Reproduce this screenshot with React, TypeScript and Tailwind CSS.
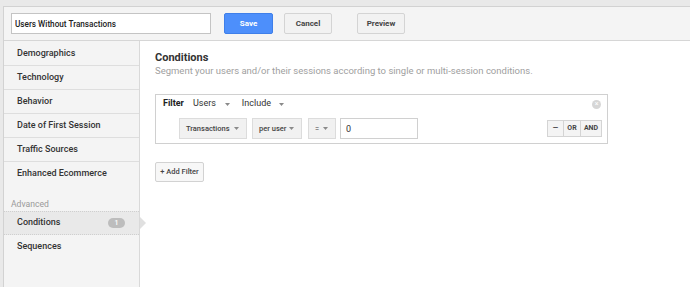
import { useState } from 'react'

const sections = [
  'Demographics',
  'Technology',
  'Behavior',
  'Date of First Session',
  'Traffic Sources',
  'Enhanced Ecommerce',
]

function Caret({ className = '' }: { className?: string }) {
  return (
    <svg width="5" height="3" viewBox="0 0 5 3" className={className}>
      <path d="M0 0 L5 0 L2.5 3 Z" fill="#8a8a8a" />
    </svg>
  )
}

function Select({ label, width }: { label: string; width: string }) {
  return (
    <div
      className={`${width} h-[21px] flex items-center justify-between pl-[6px] pr-[7px] bg-[#f1f1f1] border border-[#dcdcdc] text-[7.5px] font-medium text-[#444] whitespace-nowrap`}
    >
      <span>{label}</span>
      <Caret />
    </div>
  )
}

export default function App() {
  const [name, setName] = useState('Users Without Transactions')
  const [value, setValue] = useState('0')

  return (
    <div
      className="w-[690px] h-[287px] overflow-hidden bg-[#e9e9e9] pt-[6px] pl-[3px]"
      style={{ fontFamily: 'Roboto, "Liberation Sans", Arial, sans-serif' }}
    >
      <div className="h-full flex flex-col bg-white border-t border-l border-[#d2d2d2] border-l-dotted">
        {/* header */}
        <header className="h-[34px] shrink-0 flex items-center pl-[7px] bg-[#f4f4f4] border-b border-[#d6d6d6]">
          <input
            value={name}
            onChange={(e) => setName(e.target.value)}
            className="w-[200px] h-[21px] px-[3px] bg-white border border-[#c4c4c4] text-[8.2px] font-medium text-[#222] outline-none"
          />
          <button className="ml-[13px] w-[49px] h-[21px] rounded-[2px] bg-[#4d8ffb] border border-[#3f7fe9] text-white text-[8px] font-bold">
            Save
          </button>
          <button className="ml-[11px] w-[48px] h-[21px] rounded-[2px] bg-[#f2f2f2] border border-[#d4d4d4] text-[#444] text-[8px] font-bold">
            Cancel
          </button>
          <button className="ml-[25px] w-[48px] h-[21px] rounded-[2px] bg-[#f2f2f2] border border-[#d4d4d4] text-[#444] text-[8px] font-bold">
            Preview
          </button>
        </header>

        <div className="flex flex-1 min-h-0">
          {/* sidebar */}
          <aside className="w-[136px] shrink-0 pt-[1px] bg-[#f4f4f4] border-r border-[#d9d9d9]">
            {sections.map((s, i) => (
              <div
                key={s}
                className={`h-[24px] flex items-center pl-[13px] text-[9px] font-medium text-[#333] ${
                  i < sections.length - 1 ? 'border-b border-[#dedede]' : ''
                }`}
              >
                {s}
              </div>
            ))}
            <div className="h-[25px] flex items-end pl-[7px] text-[8.6px] text-[#9a9a9a]">
              Advanced
            </div>
            <div className="relative h-[24px] flex items-center justify-between pl-[13px] pr-[14px] bg-[#e9e9e9] border-t border-b border-dotted border-[#cfcfcf] text-[9px] font-medium text-[#333]">
              <span>Conditions</span>
              <span className="w-[17px] h-[10px] rounded-full bg-[#bdbdbd] text-white text-[7px] leading-[10px] text-center">
                1
              </span>
              <span className="absolute right-[-7px] top-[5px] w-0 h-0 border-y-[6px] border-y-transparent border-l-[6px] border-l-[#e0e0e0]" />
            </div>
            <div className="h-[24px] flex items-center pl-[13px] text-[9px] font-medium text-[#333]">
              Sequences
            </div>
          </aside>

          {/* main */}
          <main className="flex-1 pl-[15px] pt-[10px]">
            <h1 className="text-[11px] font-bold text-[#333] leading-[14px]">Conditions</h1>
            <p className="text-[9.5px] text-[#a0a0a0] leading-[12px]">
              Segment your users and/or their sessions according to single or multi-session conditions.
            </p>

            <div className="mt-[17px] w-[453px] h-[50px] border border-[#d0d0d0]">
              <div className="flex items-center h-[18px] pl-[7px] pr-[6px] text-[9px]">
                <span className="font-bold text-[#222]">Filter</span>
                <span className="ml-[9px] text-[#333]">Users</span>
                <Caret className="ml-[9px]" />
                <span className="ml-[12px] text-[#333]">Include</span>
                <Caret className="ml-[8px]" />
                <span className="ml-auto w-[9px] h-[9px] rounded-full bg-[#d6d6d6] flex items-center justify-center text-white text-[7px] leading-none">
                  ×
                </span>
              </div>
              <div className="flex items-center mt-[5px] pl-[23px] pr-[5px]">
                <Select label="Transactions" width="w-[68px]" />
                <div className="ml-[5px]">
                  <Select label="per user" width="w-[50px]" />
                </div>
                <div className="ml-[6px]">
                  <Select label="=" width="w-[28px]" />
                </div>
                <input
                  value={value}
                  onChange={(e) => setValue(e.target.value)}
                  className="ml-[4px] w-[78px] h-[21px] px-[5px] bg-white border border-[#d0d0d0] text-[9px] text-[#333] outline-none"
                />
                <div className="ml-auto flex h-[17px] border border-[#d4d4d4] bg-[#f4f4f4] text-[7px] font-bold text-[#444]">
                  <span className="w-[16px] flex items-center justify-center border-r border-[#d4d4d4]">—</span>
                  <span className="w-[17px] flex items-center justify-center border-r border-[#d4d4d4]">OR</span>
                  <span className="w-[20px] flex items-center justify-center">AND</span>
                </div>
              </div>
            </div>

            <button className="mt-[18px] w-[49px] h-[20px] rounded-[2px] bg-[#f7f7f7] border border-[#d2d2d2] text-[7.5px] font-medium text-[#444]">
              + Add Filter
            </button>
          </main>
        </div>
      </div>
    </div>
  )
}
